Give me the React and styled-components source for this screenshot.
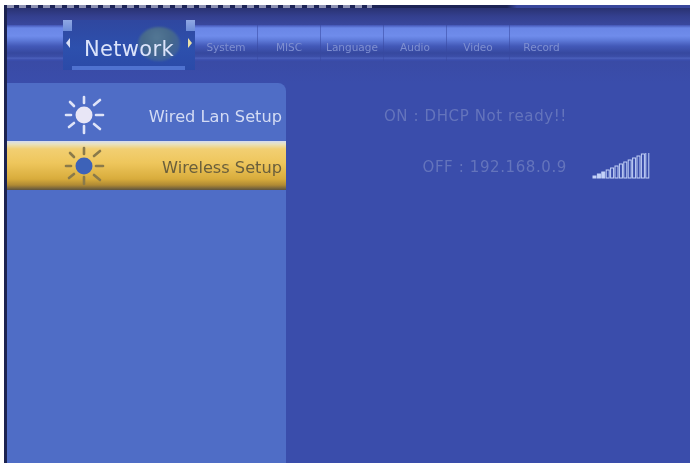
import React from "react";
import styled, { createGlobalStyle } from "styled-components";

const GlobalStyle = createGlobalStyle`
  html, body {
    margin: 0;
    padding: 0;
    background: #fff;
  }
  body {
    font-family: "DejaVu Sans", "Liberation Sans", sans-serif;
  }
`;

//small sun icon, colours change on the selected row
const Sun = ({ core, ray }) => (
  <SunIcon viewBox="0 0 42 42">
    <g stroke={ray} strokeWidth="2.6" strokeLinecap="round">
      <path d="M20 2 V8" />
      <path d="M20 31 V38" />
      <path d="M2 20 H7" />
      <path d="M32 20 H39" />
      <path d="M5 32 L10 28" />
      <path d="M30 10 L36 5" />
      <path d="M6 7 L10 11" />
      <path d="M30 29 L36 34" />
    </g>
    <circle cx="20" cy="20" r="8.5" fill={core} />
  </SunIcon>
);

const SignalBars = () => (
  <SignalIcon viewBox="0 0 58 27">
    {[...Array(13)].map((_, i) => {
      const h = 2 + i * 2;
      return (
        <rect
          key={i}
          x={1 + i * 4.4}
          y={25 - h}
          width="3"
          height={h}
          fill={i < 3 ? "#c4d2f8" : "none"}
          stroke="#c4d2f8"
          strokeWidth="1"
        />
      );
    })}
  </SignalIcon>
);

const tabs = ["System", "MISC", "Language", "Audio", "Video", "Record"];

export default function App() {
  return (
    <>
      <GlobalStyle />
      <Screen>
        <TopStrip />
        <Header>
          <Band>
            <LeftBand />
            <ActiveTab>
              <Cap side="left" />
              <Cap side="right" />
              <Arrow side="left" />
              <Arrow side="right" />
              <Globe />
              <ActiveLabel>Network</ActiveLabel>
            </ActiveTab>
            <TabList>
              {tabs.map((t) => (
                <Tab key={t}>{t}</Tab>
              ))}
            </TabList>
          </Band>
        </Header>
        <Body>
          <Sidebar>
            <MenuRow>
              <Sun core="#e8e6f6" ray="#dfe4f8" />
              <MenuLabel>Wired Lan Setup</MenuLabel>
            </MenuRow>
            <MenuRow selected>
              <Sun core="#3d62b8" ray="#8a7a4a" />
              <MenuLabel selected>Wireless Setup</MenuLabel>
            </MenuRow>
          </Sidebar>
          <Content>
            <StatusRow pad="83px">
              <StatusText>ON : DHCP Not ready!!</StatusText>
            </StatusRow>
            <StatusRow>
              <StatusText>OFF : 192.168.0.9</StatusText>
              <SignalBars />
            </StatusRow>
          </Content>
        </Body>
      </Screen>
    </>
  );
}

const Screen = styled.div`
  width: 686px;
  height: 458px;
  margin: 5px 0 0 4px;
  display: flex;
  flex-direction: column;
  overflow: hidden;
  background: #3a4dab;
  border-left: 3px solid #1c2350;
  box-sizing: border-box;
`;

const TopStrip = styled.div`
  height: 3px;
  flex: none;
  background: repeating-linear-gradient(
      to right,
      #8f93b4 0,
      #8f93b4 7px,
      #1d2456 7px,
      #1d2456 12px
    )
    0 0 / 365px 100% no-repeat,
    linear-gradient(to right, #1d2456 0, #1d2456 500px, #39479c 510px);
`;

const Header = styled.div`
  height: 75px;
  flex: none;
  padding-top: 12px;
  box-sizing: border-box;
  background: linear-gradient(
    to bottom,
    #2a3272 0,
    #333f8e 8px,
    #39479c 16px,
    #3a4dab 75px
  );
`;

const Band = styled.div`
  display: flex;
  height: 50px;
  align-items: flex-start;
`;

const bandBackground = `linear-gradient(
  to bottom,
  #4254b4 0,
  #6a86e6 3px,
  #6f8ceb 11px,
  #5f7bda 15px,
  #4359b8 21px,
  #36489f 28px,
  #3c4fa9 32px,
  #4d62bd 33px,
  #3a4dab 35px
)`;

const LeftBand = styled.div`
  width: 56px;
  height: 36px;
  flex: none;
  margin-top: 5px;
  background: ${bandBackground};
`;

const ActiveTab = styled.div`
  position: relative;
  width: 132px;
  height: 50px;
  flex: none;
  display: flex;
  align-items: center;
  justify-content: center;
  background: linear-gradient(to bottom, #2f479f 0, #2d50ad 28px, #2b4aa8 50px);
  &::after {
    content: "";
    position: absolute;
    left: 9px;
    right: 10px;
    bottom: 0;
    height: 4px;
    background: #4f72d0;
  }
`;

const Cap = styled.span`
  position: absolute;
  top: 0;
  ${(p) => (p.side === "left" ? "left: 0;" : "right: 0;")}
  width: 9px;
  height: 11px;
  background: linear-gradient(to bottom, #8fa8e4, #6d8cd8);
`;

const Arrow = styled.span`
  position: absolute;
  top: 18px;
  ${(p) => (p.side === "left" ? "left: 3px;" : "right: 3px;")}
  width: 0;
  height: 0;
  border-top: 5px solid transparent;
  border-bottom: 5px solid transparent;
  ${(p) =>
    p.side === "left"
      ? "border-right: 4px solid #d8dff5;"
      : "border-left: 4px solid #e8e0a8;"}
`;

const Globe = styled.span`
  position: absolute;
  right: 15px;
  top: 7px;
  width: 42px;
  height: 34px;
  border-radius: 50%;
  background: radial-gradient(circle at 45% 30%, #5d8290 0, #4d7184 40%, #3a5ba6 100%);
  opacity: 0.8;
  filter: blur(1px);
`;

const ActiveLabel = styled.span`
  position: relative;
  font-size: 21px;
  letter-spacing: 0.3px;
  color: #dbe3fa;
  filter: blur(0.3px);
  margin-top: 8px;
`;

const TabList = styled.div`
  flex: 1;
  height: 36px;
  margin-top: 5px;
  display: flex;
  background: ${bandBackground};
`;

const Tab = styled.div`
  width: 63px;
  flex: none;
  box-sizing: border-box;
  padding-top: 16px;
  border-right: 1px solid rgba(56, 72, 160, 0.55);
  text-align: center;
  font-size: 10.5px;
  color: #7f8fd0;
  filter: blur(0.6px);
  &:last-child {
    border-right: none;
  }
`;

const Body = styled.div`
  flex: 1;
  display: flex;
  min-height: 0;
`;

const Sidebar = styled.div`
  width: 279px;
  flex: none;
  border-radius: 0 8px 0 0;
  background: #4f6dc6;
`;

const MenuRow = styled.div`
  height: ${(p) => (p.selected ? "49px" : "58px")};
  padding: ${(p) => (p.selected ? "3px" : "8px")} 4px 0 57px;
  display: flex;
  align-items: center;
  justify-content: space-between;
  box-sizing: border-box;
  ${(p) =>
    p.selected &&
    `
    background: linear-gradient(
      to bottom,
      #d6dcf0 0,
      #e8e2c0 3px,
      #f2cf72 8px,
      #eec65c 22px,
      #d8ac3c 38px,
      #b08a34 44px,
      #5d5340 49px
    );
  `}
`;

const SunIcon = styled.svg`
  width: 42px;
  height: 42px;
  flex: none;
  filter: blur(0.5px);
`;

const MenuLabel = styled.span`
  font-size: 16.2px;
  color: ${(p) => (p.selected ? "#6a5f3c" : "#d3dbf4")};
  filter: blur(0.4px);
`;

const Content = styled.div`
  flex: 1;
  display: flex;
  flex-direction: column;
  align-items: flex-end;
  padding: 23px 40px 0 0;
  gap: 31px;
`;

const StatusRow = styled.div`
  display: flex;
  align-items: center;
  height: 20px;
  padding-right: ${(p) => p.pad || 0};
`;

const StatusText = styled.span`
  font-size: 15px;
  letter-spacing: 0.6px;
  color: #6474bc;
  filter: blur(0.5px);
`;

const SignalIcon = styled.svg`
  width: 58px;
  height: 27px;
  margin: -2px 0 0 25px;
`;
